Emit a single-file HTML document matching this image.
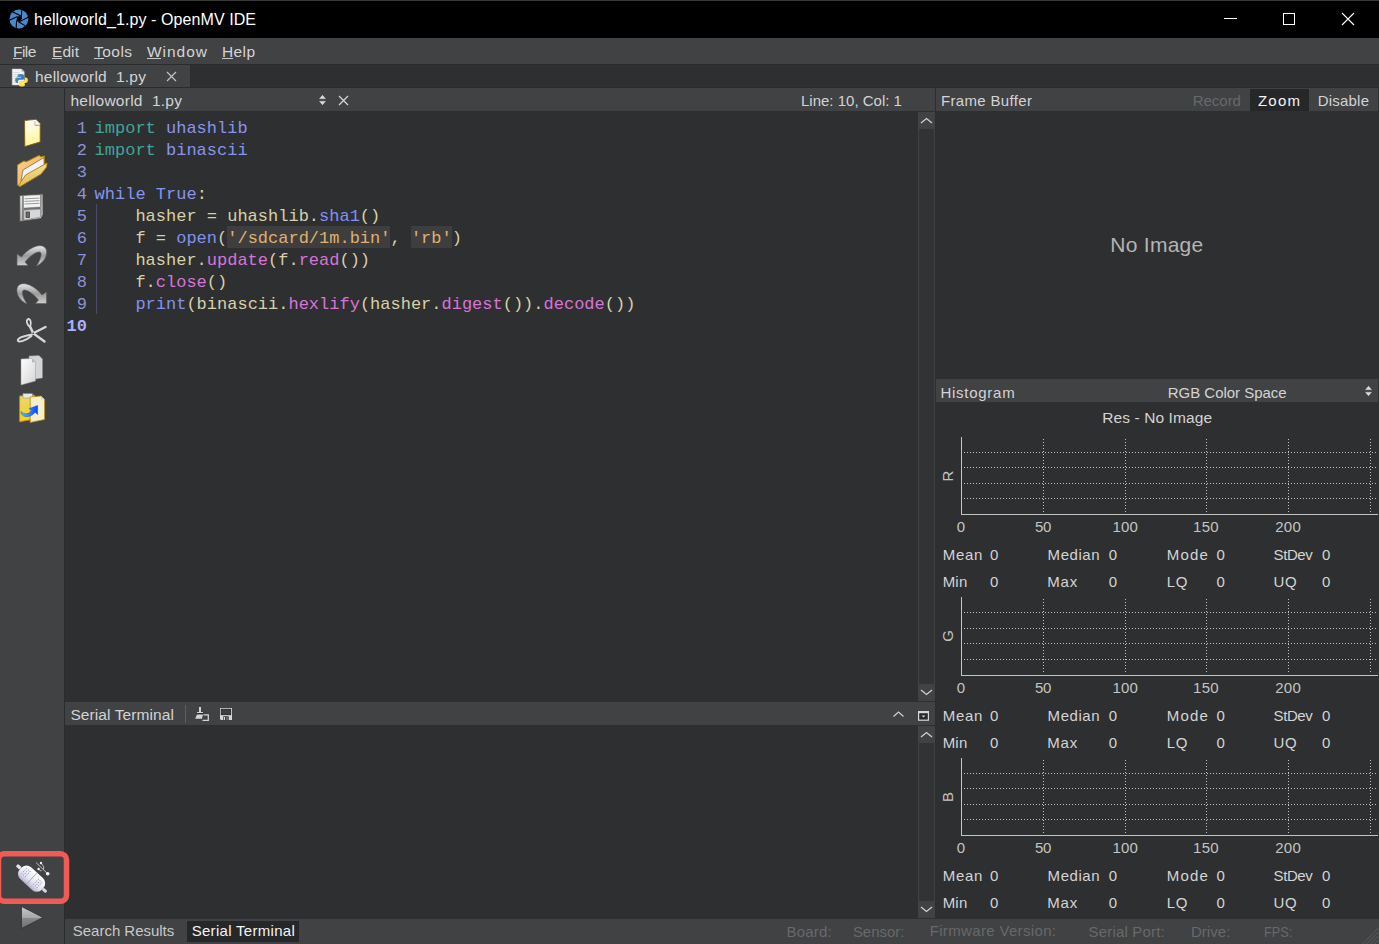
<!DOCTYPE html>
<html><head><meta charset="utf-8">
<style>
*{margin:0;padding:0;box-sizing:border-box}
html,body{width:1379px;height:944px;overflow:hidden;background:#2e2f30}
body{position:relative;font-family:"Liberation Sans",sans-serif;color:#d0d0d0;font-size:16px}
.a{position:absolute}
.t{position:absolute;white-space:pre;line-height:1}
.code{font-family:"Liberation Mono",monospace;font-size:17px;line-height:22px;white-space:pre}
.n{color:#8a92d8}
.kw{color:#43a39c}
.md{color:#8794ee}
.fn{color:#d874d8}
.bi{color:#8291ec}
.tx{color:#d8d0a8}
.st{color:#e0b070;background:#3e3e3e;padding:3px 0 0}
.dot{background-image:linear-gradient(90deg,#c4c4c4 1px,transparent 1px);background-size:3px 1px;height:1px}
.vdot{background-image:linear-gradient(180deg,#c4c4c4 1px,transparent 1px);background-size:1px 3px;width:1px}
</style></head><body>

<div class="a" style="left:0px;top:0px;width:1379px;height:1px;background:#3a3a3a"></div>
<div class="a" style="left:0px;top:1px;width:1379px;height:37px;background:#000"></div>
<svg class="a" style="left:9px;top:9px" width="20" height="20" viewBox="0 0 20 20">
  <circle cx="9.9" cy="10" r="9.4" fill="#4a88cc"/>
  <g stroke="#000" stroke-width="1.1" stroke-linecap="round">
    <line x1="3.8" y1="2.9" x2="11.6" y2="6.8"/>
    <line x1="12.7" y1="1.2" x2="12.3" y2="9.8"/>
    <line x1="18.8" y1="8.4" x2="11.2" y2="12.3"/>
    <line x1="15.9" y1="16.6" x2="9.6" y2="12.7"/>
    <line x1="7.2" y1="18.6" x2="7.6" y2="11.9"/>
    <line x1="0.8" y1="11" x2="8.1" y2="7.7"/>
  </g>
  <polygon points="8.1,7.7 11.6,6.8 12.3,9.8 11.2,12.3 9.6,12.7 7.6,11.9" fill="#000"/>
</svg>
<div class="t" style="left:34.00px;top:12px;font-size:16px;color:#ffffff;letter-spacing:0.088px">helloworld_1.py - OpenMV IDE</div>
<div class="a" style="left:1224px;top:18px;width:13px;height:1px;background:#fff"></div>
<div class="a" style="left:1283px;top:13px;width:12px;height:12px;border:1px solid #fff"></div>
<svg class="a" style="left:1341px;top:12px" width="14" height="14" viewBox="0 0 14 14"><path d="M1 1L13 13M13 1L1 13" stroke="#fff" stroke-width="1.1"/></svg>
<div class="a" style="left:0px;top:38px;width:1379px;height:26px;background:#404244"></div>
<div class="a" style="left:0px;top:64px;width:1379px;height:1px;background:#2a2b2c"></div>
<div class="t" style="left:13.00px;top:44px;font-size:15.5px;color:#d4d4d4;letter-spacing:-0.567px">File</div>
<div class="a" style="left:13px;top:58px;width:9px;height:1px;background:#c8c8c8"></div>
<div class="t" style="left:52.00px;top:44px;font-size:15.5px;color:#d4d4d4;letter-spacing:0.083px">Edit</div>
<div class="a" style="left:52px;top:58px;width:10px;height:1px;background:#c8c8c8"></div>
<div class="t" style="left:94.00px;top:44px;font-size:15.5px;color:#d4d4d4;letter-spacing:0.469px">Tools</div>
<div class="a" style="left:94px;top:58px;width:10px;height:1px;background:#c8c8c8"></div>
<div class="t" style="left:147.00px;top:44px;font-size:15.5px;color:#d4d4d4;letter-spacing:0.975px">Window</div>
<div class="a" style="left:147px;top:58px;width:14px;height:1px;background:#c8c8c8"></div>
<div class="t" style="left:222.00px;top:44px;font-size:15.5px;color:#d4d4d4;letter-spacing:0.375px">Help</div>
<div class="a" style="left:222px;top:58px;width:11px;height:1px;background:#c8c8c8"></div>
<div class="a" style="left:0px;top:65px;width:1379px;height:23px;background:#2e2f30"></div>
<div class="a" style="left:0px;top:65px;width:190px;height:22px;background:#404244"></div>
<div class="a" style="left:0px;top:87px;width:1379px;height:1px;background:#2a2b2c"></div>
<div class="t" style="left:35.00px;top:69px;font-size:15.5px;color:#d4d4d4;letter-spacing:0.217px">helloworld  1.py</div>
<svg class="a" style="left:166px;top:71px" width="11" height="11" viewBox="0 0 11 11"><path d="M1 1L10 10M10 1L1 10" stroke="#c8c8c8" stroke-width="1.1"/></svg>
<svg class="a" style="left:10px;top:66px" width="20" height="22" viewBox="10 66 20 22">
<defs><linearGradient id="pyb" x1="0" y1="0" x2="1" y2="1"><stop offset="0" stop-color="#5a9fd4"/><stop offset="1" stop-color="#306998"/></linearGradient>
<linearGradient id="pyy" x1="0" y1="0" x2="1" y2="1"><stop offset="0" stop-color="#ffe873"/><stop offset="1" stop-color="#ffd43b"/></linearGradient></defs>
<path d="M12.2,69 L21.5,69 L24.2,71.8 L24.2,85 L12.2,85 Z" fill="#f4f4f4" stroke="#c8c8c8" stroke-width="0.5"/>
<path d="M21.5,69 L21.5,71.8 L24.2,71.8 Z" fill="#b8b8b8"/>
<path d="M13.5,72.5 h6 M13.5,74.5 h5 M13.5,76.5 h4 M13.5,78.5 h3 M13.5,80.5 h3 M13.5,82.5 h3" stroke="#c8c8c8" stroke-width="0.6"/>
<path d="M19.5,74 C17.5,74 17.5,75 17.5,76 L17.5,77 L21,77 L21,77.6 L16.8,77.6 C15.5,77.6 15.2,79 15.2,80.3 C15.2,82 16,83 17.2,83 L18,83 L18,81.5 C18,80.5 18.8,79.8 19.8,79.8 L22.5,79.8 C23.5,79.8 24.2,79 24.2,78 L24.2,76 C24.2,75 23.3,74 22,74 Z" fill="url(#pyb)"/>
<path d="M22.8,86.6 C24.8,86.6 24.8,85.6 24.8,84.6 L24.8,83.6 L21.3,83.6 L21.3,83 L25.5,83 C26.8,83 27.9,82 27.9,80.3 C27.9,78.6 27,77.6 25.8,77.6 L25,77.6 L25,79.1 C25,80.1 24.2,80.8 23.2,80.8 L20.5,80.8 C19.5,80.8 18.8,81.6 18.8,82.6 L18.8,84.6 C18.8,85.6 19.7,86.6 21,86.6 Z" fill="url(#pyy)"/>
</svg>
<div class="a" style="left:0px;top:88px;width:64px;height:856px;background:#404244"></div>
<div class="a" style="left:64px;top:88px;width:1px;height:856px;background:#2a2b2c"></div>
<div class="a" style="left:65px;top:88px;width:870px;height:23px;background:#404244"></div>
<div class="t" style="left:70.40px;top:93px;font-size:15.5px;color:#d4d4d4;letter-spacing:0.257px">helloworld  1.py</div>
<div class="t" style="left:801.00px;top:93px;font-size:15px;color:#d4d4d4">Line: 10, Col: 1</div>
<div class="a" style="left:65px;top:112px;width:853px;height:589px;background:#2e2f30"></div>
<!-- code -->
<div class="a code n" style="left:57px;top:118px;width:30px;text-align:right">1
2
3
4
5
6
7
8
9
<b style="color:#a8b0ff">10</b></div>
<div class="a" style="left:96px;top:204px;width:1px;height:110px;background:#4a4b66"></div>
<div class="a code tx" style="left:94.6px;top:118px"><span class="kw">import</span> <span class="md">uhashlib</span>
<span class="kw">import</span> <span class="md">binascii</span>

<span class="md">while</span> <span class="md">True</span>:
    hasher = uhashlib.<span class="bi">sha1</span>()
    f = <span class="bi">open</span>(<span class="st">'/sdcard/1m.bin'</span>, <span class="st">'rb'</span>)
    hasher.<span class="fn">update</span>(f.<span class="fn">read</span>())
    f.<span class="fn">close</span>()
    <span class="bi">print</span>(binascii.<span class="fn">hexlify</span>(hasher.<span class="fn">digest</span>()).<span class="fn">decode</span>())
</div>


<div class="a" style="left:918px;top:112px;width:17px;height:589px;background:#404244"></div>
<div class="a" style="left:919px;top:129px;width:15px;height:555px;background:#323335"></div>
<div class="a" style="left:935px;top:88px;width:1px;height:831px;background:#2d2e2f"></div>
<div class="a" style="left:65px;top:702px;width:870px;height:23px;background:#404244"></div>
<div class="t" style="left:70.40px;top:707px;font-size:15.5px;color:#d4d4d4;letter-spacing:0.096px">Serial Terminal</div>
<div class="a" style="left:918px;top:726px;width:17px;height:192px;background:#404244"></div>
<div class="a" style="left:919px;top:743px;width:15px;height:158px;background:#323335"></div>
<!-- editor header icons -->
<svg class="a" style="left:316px;top:92px" width="14" height="16" viewBox="0 0 14 16"><path d="M2.4,7.2 L6.5,2.6 L10.6,7.2 Z M2.4,8.8 L6.5,13.4 L10.6,8.8 Z" fill="#dadada" stroke="#161616" stroke-width="0.5"/></svg>
<svg class="a" style="left:336px;top:93px" width="15" height="15" viewBox="0 0 15 15"><path d="M3,3 L12,12 M12,3 L3,12" stroke="#d4d4d4" stroke-width="1.3"/></svg>
<!-- scroll chevrons -->
<svg class="a" style="left:918px;top:112px" width="17" height="17" viewBox="0 0 17 17"><path d="M3,11 L8.5,6.5 L14,11" fill="none" stroke="#d0d0d0" stroke-width="1.3"/></svg>
<svg class="a" style="left:918px;top:684px" width="17" height="17" viewBox="0 0 17 17"><path d="M3,6 L8.5,10.5 L14,6" fill="none" stroke="#d0d0d0" stroke-width="1.3"/></svg>
<svg class="a" style="left:918px;top:726px" width="17" height="17" viewBox="0 0 17 17"><path d="M3,11 L8.5,6.5 L14,11" fill="none" stroke="#d0d0d0" stroke-width="1.3"/></svg>
<svg class="a" style="left:918px;top:901px" width="17" height="17" viewBox="0 0 17 17"><path d="M3,6 L8.5,10.5 L14,6" fill="none" stroke="#d0d0d0" stroke-width="1.3"/></svg>
<!-- serial header icons -->
<div class="a" style="left:185px;top:705px;width:1px;height:18px;background:#5c5e60"></div>
<svg class="a" style="left:190px;top:704px" width="50" height="20" viewBox="190 704 50 20">
 <rect x="199" y="707" width="2" height="5" fill="#d4d4d4"/>
 <rect x="197" y="712" width="6" height="1" fill="#d4d4d4"/><rect x="196.5" y="713" width="7" height="1" fill="#2a2a2a"/>
 <path d="M195.2,718.8 L197,714.5 L203,714.5 L202,718.8 Z" fill="#d4d4d4"/>
 <path d="M203.5,714.8 L208.3,714.8 L208.3,720.3 L202.5,720.3" fill="none" stroke="#d4d4d4" stroke-width="1.3"/>
 <path d="M220,708 L232,708 L232,720 L221,720 L220,719 Z" fill="#d6d6d6"/>
 <rect x="221.2" y="709.2" width="9.5" height="5.5" fill="#3c3d3f" stroke="#1c1c1c" stroke-width="0.8"/>
 <rect x="223.2" y="716.3" width="5.5" height="3.7" fill="#2a2a2a"/>
 <rect x="223.8" y="717" width="1.3" height="3" fill="#d8d8d8"/>
 <rect x="226" y="717" width="2.3" height="3" fill="#666"/>
</svg>
<svg class="a" style="left:890px;top:706px" width="16" height="16" viewBox="0 0 16 16"><path d="M3.5,10.5 L8.5,6 L13.5,10.5" fill="none" stroke="#d0d0d0" stroke-width="1.2"/></svg>
<svg class="a" style="left:917px;top:710px" width="13" height="12" viewBox="0 0 13 12"><rect x="1.6" y="1.6" width="9.8" height="8.6" fill="#2a2a2a" stroke="#d8d8d8" stroke-width="1.2"/><rect x="1.6" y="1.6" width="9.8" height="1.6" fill="#d8d8d8"/><path d="M4.6,5.5 L8.4,5.5 L6.5,7.6 Z" fill="#d8d8d8"/></svg>


<div class="a" style="left:65px;top:919px;width:1314px;height:25px;background:#404244"></div>
<div class="t" style="left:72.80px;top:923px;font-size:15px;color:#c8c8c8;letter-spacing:-0.019px">Search Results</div>
<div class="a" style="left:187px;top:921px;width:112px;height:21px;background:#262728"></div>
<div class="t" style="left:191.70px;top:923px;font-size:15px;color:#f4f4f4;letter-spacing:0.295px">Serial Terminal</div>
<div class="t" style="left:786.50px;top:924px;font-size:15px;color:#67696b;letter-spacing:0.210px">Board:</div>
<div class="t" style="left:852.90px;top:924px;font-size:15px;color:#67696b;letter-spacing:-0.042px">Sensor:</div>
<div class="t" style="left:929.70px;top:923px;font-size:15px;color:#67696b;letter-spacing:0.339px">Firmware Version:</div>
<div class="t" style="left:1088.50px;top:924px;font-size:15px;color:#67696b;letter-spacing:0.186px">Serial Port:</div>
<div class="t" style="left:1190.90px;top:924px;font-size:15px;color:#67696b;letter-spacing:0.075px">Drive:</div>
<div class="t" style="left:1263.60px;top:924px;font-size:15px;color:#67696b;transform:scaleX(0.8479);transform-origin:0.00px 0">FPS:</div>
<svg class="a" style="left:1360px;top:926px" width="19" height="18" viewBox="1360 926 19 18"><path d="M1362,944.5 L1378.5,928 M1366,944.5 L1378.5,932 M1370,944.5 L1378.5,936 M1374,944.5 L1378.5,940" stroke="#5e6062" stroke-width="0.9"/></svg>
<div class="a" style="left:936px;top:88px;width:442px;height:23px;background:#404244"></div>
<div class="t" style="left:940.90px;top:93px;font-size:15px;color:#d4d4d4;letter-spacing:0.350px">Frame Buffer</div>
<div class="t" style="left:1192.70px;top:93px;font-size:15px;color:#67696b;letter-spacing:-0.015px">Record</div>
<div class="a" style="left:1250px;top:89px;width:59px;height:22px;background:#262728"></div>
<div class="t" style="left:1258.00px;top:93px;font-size:15px;color:#f4f4f4;letter-spacing:1.208px">Zoom</div>
<div class="t" style="left:1317.70px;top:93px;font-size:15px;color:#d4d4d4;letter-spacing:0.217px">Disable</div>
<div class="t" style="left:1110.30px;top:234px;font-size:21px;color:#b4b4b4;letter-spacing:0.271px">No Image</div>
<div class="a" style="left:936px;top:379px;width:442px;height:23px;background:#404244"></div>
<div class="t" style="left:940.40px;top:385px;font-size:15px;color:#d4d4d4;letter-spacing:0.741px">Histogram</div>
<div class="t" style="left:1167.80px;top:385px;font-size:15px;color:#d4d4d4;letter-spacing:-0.025px">RGB Color Space</div>
<svg class="a" style="left:1362px;top:383px" width="14" height="16" viewBox="0 0 14 16"><path d="M2.4,7.2 L6.5,2.6 L10.6,7.2 Z M2.4,8.8 L6.5,13.4 L10.6,8.8 Z" fill="#dadada" stroke="#161616" stroke-width="0.5"/></svg>
<div class="t" style="left:1102.30px;top:410px;font-size:15.5px;color:#d4d4d4;letter-spacing:0.092px">Res - No Image</div>
<div class="a" style="left:961px;top:437px;width:1px;height:78px;background:#c4c4c4"></div>
<div class="a" style="left:961px;top:514px;width:417px;height:1px;background:#c4c4c4"></div>
<div class="a dot" style="left:964px;top:452px;width:414px"></div>
<div class="a dot" style="left:964px;top:467px;width:414px"></div>
<div class="a dot" style="left:964px;top:483px;width:414px"></div>
<div class="a dot" style="left:964px;top:498px;width:414px"></div>
<div class="a vdot" style="left:1043px;top:439px;height:74px"></div>
<div class="a vdot" style="left:1125px;top:439px;height:74px"></div>
<div class="a vdot" style="left:1206px;top:439px;height:74px"></div>
<div class="a vdot" style="left:1288px;top:439px;height:74px"></div>
<div class="a vdot" style="left:1370px;top:439px;height:74px"></div>
<div class="t" style="left:928px;top:467.5px;width:40px;height:16px;line-height:16px;text-align:center;font-size:15px;color:#c4c4c4;transform:rotate(-90deg)">R</div>
<div class="t" style="left:956.70px;top:519px;font-size:15px;color:#c4c4c4">0</div>
<div class="t" style="left:1035.00px;top:519px;font-size:15px;color:#c4c4c4;letter-spacing:-0.325px">50</div>
<div class="t" style="left:1112.40px;top:519px;font-size:15px;color:#c4c4c4;letter-spacing:0.200px">100</div>
<div class="t" style="left:1193.00px;top:519px;font-size:15px;color:#c4c4c4;letter-spacing:0.300px">150</div>
<div class="t" style="left:1275.30px;top:519px;font-size:15px;color:#c4c4c4;letter-spacing:0.200px">200</div>
<div class="t" style="left:942.70px;top:547px;font-size:15px;color:#d4d4d4;letter-spacing:0.700px">Mean</div>
<div class="t" style="left:990.00px;top:547px;font-size:15px;color:#d4d4d4">0</div>
<div class="t" style="left:1047.60px;top:547px;font-size:15px;color:#d4d4d4;letter-spacing:0.550px">Median</div>
<div class="t" style="left:1108.70px;top:547px;font-size:15px;color:#d4d4d4">0</div>
<div class="t" style="left:1166.80px;top:547px;font-size:15px;color:#d4d4d4;letter-spacing:1.167px">Mode</div>
<div class="t" style="left:1216.60px;top:547px;font-size:15px;color:#d4d4d4">0</div>
<div class="t" style="left:1273.60px;top:547px;font-size:15px;color:#d4d4d4;letter-spacing:-0.444px">StDev</div>
<div class="t" style="left:1321.90px;top:547px;font-size:15px;color:#d4d4d4">0</div>
<div class="t" style="left:942.70px;top:574px;font-size:15px;color:#d4d4d4;letter-spacing:0.188px">Min</div>
<div class="t" style="left:990.00px;top:574px;font-size:15px;color:#d4d4d4">0</div>
<div class="t" style="left:1047.30px;top:574px;font-size:15px;color:#d4d4d4;letter-spacing:0.812px">Max</div>
<div class="t" style="left:1108.70px;top:574px;font-size:15px;color:#d4d4d4">0</div>
<div class="t" style="left:1166.80px;top:574px;font-size:15px;color:#d4d4d4;letter-spacing:0.500px">LQ</div>
<div class="t" style="left:1216.60px;top:574px;font-size:15px;color:#d4d4d4">0</div>
<div class="t" style="left:1273.60px;top:574px;font-size:15px;color:#d4d4d4;letter-spacing:0.500px">UQ</div>
<div class="t" style="left:1321.90px;top:574px;font-size:15px;color:#d4d4d4">0</div>
<div class="a" style="left:961px;top:597px;width:1px;height:79px;background:#c4c4c4"></div>
<div class="a" style="left:961px;top:675px;width:417px;height:1px;background:#c4c4c4"></div>
<div class="a dot" style="left:964px;top:612px;width:414px"></div>
<div class="a dot" style="left:964px;top:628px;width:414px"></div>
<div class="a dot" style="left:964px;top:643px;width:414px"></div>
<div class="a dot" style="left:964px;top:659px;width:414px"></div>
<div class="a vdot" style="left:1043px;top:599px;height:75px"></div>
<div class="a vdot" style="left:1125px;top:599px;height:75px"></div>
<div class="a vdot" style="left:1206px;top:599px;height:75px"></div>
<div class="a vdot" style="left:1288px;top:599px;height:75px"></div>
<div class="a vdot" style="left:1370px;top:599px;height:75px"></div>
<div class="t" style="left:928px;top:628.0px;width:40px;height:16px;line-height:16px;text-align:center;font-size:15px;color:#c4c4c4;transform:rotate(-90deg)">G</div>
<div class="t" style="left:956.70px;top:680px;font-size:15px;color:#c4c4c4">0</div>
<div class="t" style="left:1035.00px;top:680px;font-size:15px;color:#c4c4c4;letter-spacing:-0.325px">50</div>
<div class="t" style="left:1112.40px;top:680px;font-size:15px;color:#c4c4c4;letter-spacing:0.200px">100</div>
<div class="t" style="left:1193.00px;top:680px;font-size:15px;color:#c4c4c4;letter-spacing:0.300px">150</div>
<div class="t" style="left:1275.30px;top:680px;font-size:15px;color:#c4c4c4;letter-spacing:0.200px">200</div>
<div class="t" style="left:942.70px;top:708px;font-size:15px;color:#d4d4d4;letter-spacing:0.700px">Mean</div>
<div class="t" style="left:990.00px;top:708px;font-size:15px;color:#d4d4d4">0</div>
<div class="t" style="left:1047.60px;top:708px;font-size:15px;color:#d4d4d4;letter-spacing:0.550px">Median</div>
<div class="t" style="left:1108.70px;top:708px;font-size:15px;color:#d4d4d4">0</div>
<div class="t" style="left:1166.80px;top:708px;font-size:15px;color:#d4d4d4;letter-spacing:1.167px">Mode</div>
<div class="t" style="left:1216.60px;top:708px;font-size:15px;color:#d4d4d4">0</div>
<div class="t" style="left:1273.60px;top:708px;font-size:15px;color:#d4d4d4;letter-spacing:-0.444px">StDev</div>
<div class="t" style="left:1321.90px;top:708px;font-size:15px;color:#d4d4d4">0</div>
<div class="t" style="left:942.70px;top:735px;font-size:15px;color:#d4d4d4;letter-spacing:0.188px">Min</div>
<div class="t" style="left:990.00px;top:735px;font-size:15px;color:#d4d4d4">0</div>
<div class="t" style="left:1047.30px;top:735px;font-size:15px;color:#d4d4d4;letter-spacing:0.812px">Max</div>
<div class="t" style="left:1108.70px;top:735px;font-size:15px;color:#d4d4d4">0</div>
<div class="t" style="left:1166.80px;top:735px;font-size:15px;color:#d4d4d4;letter-spacing:0.500px">LQ</div>
<div class="t" style="left:1216.60px;top:735px;font-size:15px;color:#d4d4d4">0</div>
<div class="t" style="left:1273.60px;top:735px;font-size:15px;color:#d4d4d4;letter-spacing:0.500px">UQ</div>
<div class="t" style="left:1321.90px;top:735px;font-size:15px;color:#d4d4d4">0</div>
<div class="a" style="left:961px;top:758px;width:1px;height:78px;background:#c4c4c4"></div>
<div class="a" style="left:961px;top:835px;width:417px;height:1px;background:#c4c4c4"></div>
<div class="a dot" style="left:964px;top:773px;width:414px"></div>
<div class="a dot" style="left:964px;top:788px;width:414px"></div>
<div class="a dot" style="left:964px;top:804px;width:414px"></div>
<div class="a dot" style="left:964px;top:819px;width:414px"></div>
<div class="a vdot" style="left:1043px;top:760px;height:74px"></div>
<div class="a vdot" style="left:1125px;top:760px;height:74px"></div>
<div class="a vdot" style="left:1206px;top:760px;height:74px"></div>
<div class="a vdot" style="left:1288px;top:760px;height:74px"></div>
<div class="a vdot" style="left:1370px;top:760px;height:74px"></div>
<div class="t" style="left:928px;top:788.5px;width:40px;height:16px;line-height:16px;text-align:center;font-size:15px;color:#c4c4c4;transform:rotate(-90deg)">B</div>
<div class="t" style="left:956.70px;top:840px;font-size:15px;color:#c4c4c4">0</div>
<div class="t" style="left:1035.00px;top:840px;font-size:15px;color:#c4c4c4;letter-spacing:-0.325px">50</div>
<div class="t" style="left:1112.40px;top:840px;font-size:15px;color:#c4c4c4;letter-spacing:0.200px">100</div>
<div class="t" style="left:1193.00px;top:840px;font-size:15px;color:#c4c4c4;letter-spacing:0.300px">150</div>
<div class="t" style="left:1275.30px;top:840px;font-size:15px;color:#c4c4c4;letter-spacing:0.200px">200</div>
<div class="t" style="left:942.70px;top:868px;font-size:15px;color:#d4d4d4;letter-spacing:0.700px">Mean</div>
<div class="t" style="left:990.00px;top:868px;font-size:15px;color:#d4d4d4">0</div>
<div class="t" style="left:1047.60px;top:868px;font-size:15px;color:#d4d4d4;letter-spacing:0.550px">Median</div>
<div class="t" style="left:1108.70px;top:868px;font-size:15px;color:#d4d4d4">0</div>
<div class="t" style="left:1166.80px;top:868px;font-size:15px;color:#d4d4d4;letter-spacing:1.167px">Mode</div>
<div class="t" style="left:1216.60px;top:868px;font-size:15px;color:#d4d4d4">0</div>
<div class="t" style="left:1273.60px;top:868px;font-size:15px;color:#d4d4d4;letter-spacing:-0.444px">StDev</div>
<div class="t" style="left:1321.90px;top:868px;font-size:15px;color:#d4d4d4">0</div>
<div class="t" style="left:942.70px;top:895px;font-size:15px;color:#d4d4d4;letter-spacing:0.188px">Min</div>
<div class="t" style="left:990.00px;top:895px;font-size:15px;color:#d4d4d4">0</div>
<div class="t" style="left:1047.30px;top:895px;font-size:15px;color:#d4d4d4;letter-spacing:0.812px">Max</div>
<div class="t" style="left:1108.70px;top:895px;font-size:15px;color:#d4d4d4">0</div>
<div class="t" style="left:1166.80px;top:895px;font-size:15px;color:#d4d4d4;letter-spacing:0.500px">LQ</div>
<div class="t" style="left:1216.60px;top:895px;font-size:15px;color:#d4d4d4">0</div>
<div class="t" style="left:1273.60px;top:895px;font-size:15px;color:#d4d4d4;letter-spacing:0.500px">UQ</div>
<div class="t" style="left:1321.90px;top:895px;font-size:15px;color:#d4d4d4">0</div>
<!-- toolbar icons -->
<svg class="a" style="left:0;top:0" width="70" height="944" viewBox="0 0 70 944">
<defs>
 <linearGradient id="gNew" x1="0" y1="0" x2="0.2" y2="1"><stop offset="0" stop-color="#ffffff"/><stop offset="1" stop-color="#fcf69a"/></linearGradient>
 <linearGradient id="gFb" x1="0" y1="0" x2="1" y2="1"><stop offset="0" stop-color="#fcd488"/><stop offset="1" stop-color="#e8a848"/></linearGradient>
 <linearGradient id="gFf" x1="0" y1="0" x2="0" y2="1"><stop offset="0" stop-color="#f4e08a"/><stop offset="1" stop-color="#dcc060"/></linearGradient>
 <linearGradient id="gGray" x1="0" y1="0" x2="1" y2="1"><stop offset="0" stop-color="#f0f0f0"/><stop offset="0.5" stop-color="#b8b8b8"/><stop offset="1" stop-color="#e0e0e0"/></linearGradient>
 <linearGradient id="gArc" x1="0" y1="0" x2="0" y2="1"><stop offset="0" stop-color="#e8e8e8"/><stop offset="0.5" stop-color="#9a9a9a"/><stop offset="1" stop-color="#d0d0d0"/></linearGradient>
 <linearGradient id="gPage" x1="0" y1="0" x2="1" y2="1"><stop offset="0" stop-color="#ffffff"/><stop offset="1" stop-color="#d4d4d4"/></linearGradient>
 <linearGradient id="gClip" x1="0" y1="0" x2="0" y2="1"><stop offset="0" stop-color="#e8d870"/><stop offset="1" stop-color="#f8d020"/></linearGradient>
 <linearGradient id="gBlue" x1="0" y1="0" x2="1" y2="0"><stop offset="0" stop-color="#40d0ff"/><stop offset="1" stop-color="#1040ff"/></linearGradient>
 <linearGradient id="gUsb" x1="0" y1="0" x2="1" y2="0"><stop offset="0" stop-color="#b4b4ca"/><stop offset="0.35" stop-color="#e4e4f0"/><stop offset="1" stop-color="#ffffff"/></linearGradient>
 <linearGradient id="gPlay" x1="0" y1="0" x2="0" y2="1"><stop offset="0" stop-color="#c8c8c8"/><stop offset="0.5" stop-color="#a8a8a8"/><stop offset="0.52" stop-color="#8a8a8a"/><stop offset="1" stop-color="#707070"/></linearGradient>
</defs>
<!-- new -->
<path d="M24.5,120.5 L36,119.3 L40.2,123.5 L40.2,142 L24.8,146.6 Z" fill="url(#gNew)" stroke="#805810" stroke-width="0.9"/>
<path d="M34.8,120.2 L34.8,125.3 L40,125.3 Z" fill="#f4f4f4"/>
<path d="M34.8,125.3 L39.8,125.3" stroke="#909090" stroke-width="0.9"/>
<path d="M34.8,121 L34.8,125" stroke="#a0a0a0" stroke-width="0.6"/>
<!-- open -->
<path d="M17.5,185 L17.5,165 L24,161 L26,162 L39,155.5 L41,157 L44.5,156 L44.5,170 L20,186 Z" fill="url(#gFb)" stroke="#c08418" stroke-width="1"/>
<path d="M21,181 L23,170 L44,157.5 L44,165 Z" fill="#f2f2fa" stroke="#5a4a20" stroke-width="0.6"/>
<path d="M18.5,185.5 L25.5,175 L47,163 L46.5,167 L41,174 L20,186.5 Z" fill="url(#gFf)" stroke="#c08418" stroke-width="1"/>
<!-- save -->
<path d="M19.8,195.5 L43,194 L43,214.5 L41,218.5 L19.8,221.5 Z" fill="url(#gGray)" stroke="#4a4a4a" stroke-width="0.8"/>
<path d="M22.3,196 L23.6,196 L23.6,220.5 L22.3,220.8 Z" fill="#6a6a6a"/>
<path d="M40.2,195 L41.5,195 L41.5,216 L40.2,217 Z" fill="#8a8a8a"/>
<path d="M24,196.5 L40,195.5 L40,206.5 L24,207.5 Z" fill="#f4f4f4"/>
<path d="M24.5,198.8 L39.5,198.1 M24.5,201.4 L39.5,200.7 M24.5,204 L39.5,203.3" stroke="#9a9a9a" stroke-width="1"/>
<path d="M23.6,208 L40.2,207 L40.2,209 L23.6,210 Z" fill="#707070"/>
<path d="M24,210.2 L40.5,209.3 L40.5,217 L24,220 Z" fill="#d8d8d8" stroke="#7a7a7a" stroke-width="0.5"/>
<rect x="26" y="212" width="3.5" height="5.5" fill="#6a6a6a" stroke="#303030" stroke-width="0.7"/>
<!-- undo -->
<path d="M17,254 L17,265.5 L28,265.5 L25,262 C29,257 35,252 39.5,252 C42.5,252.5 41,259 36.5,266 C43,263 47.5,257 46.5,250.5 C45.5,245 39,244.5 33,247.5 C28,250 24,253.5 21.5,257 Z" fill="url(#gArc)" stroke="#5a5a5a" stroke-width="0.6"/>
<!-- redo -->
<g transform="translate(63.5,38) scale(-1,1)">
<path d="M17,254 L17,265.5 L28,265.5 L25,262 C29,257 35,252 39.5,252 C42.5,252.5 41,259 36.5,266 C43,263 47.5,257 46.5,250.5 C45.5,245 39,244.5 33,247.5 C28,250 24,253.5 21.5,257 Z" fill="url(#gArc)" stroke="#5a5a5a" stroke-width="0.6"/>
</g>
<!-- cut -->
<g stroke="#d8d8d8" fill="none" stroke-linecap="round">
<path d="M33.2,333.3 L45.5,327" stroke-width="2.4"/>
<path d="M33.2,333.3 L44.5,341.5" stroke-width="2.4"/>
<path d="M33.2,333.3 L30,326.5" stroke-width="2.6"/>
<path d="M29.8,326.5 C27,325 26,321 27.5,319.5 C29,318 31,320 30.8,323.5 C30.6,325 30.3,326 29.8,326.5 Z" stroke-width="1.8"/>
<path d="M32,334.5 C26,335.5 17.5,337.5 17.8,340.6 C18.2,343 26,340.5 31.5,336" stroke-width="1.9"/>
</g>
<circle cx="33.2" cy="333.3" r="0.8" fill="#202020"/>
<!-- copy -->
<path d="M29,356 L39,355.5 L42.5,359 L42.5,378 L29,380 Z" fill="#d4d4d4" stroke="#8a8a8a" stroke-width="0.5"/>
<path d="M21,359 L32,358.5 L35.5,362 L35.5,381 L21,385 Z" fill="url(#gPage)" stroke="#9a9a9a" stroke-width="0.5"/>
<path d="M32,358.5 L32,362.5 L35.5,362 Z" fill="#b8b8b8"/>
<!-- paste -->
<path d="M19.6,396 L34.5,395 L34.5,419 L19.6,421.8 Z" fill="url(#gClip)" stroke="#b88a10" stroke-width="1"/>
<rect x="23" y="393.6" width="9.3" height="4.4" fill="#e8e8e8" stroke="#909090" stroke-width="0.5"/>
<path d="M30.2,397 L41,396 L44.6,399.5 L44.6,419.5 L30.2,422.5 Z" fill="#f6efcc" stroke="#b88a10" stroke-width="0.8"/>
<path d="M41,396 L41,399.5 L44.6,399.5 Z" fill="#d8d8d0"/><path d="M21.2,411.5 C24,415 29,414.5 31.5,410.8 L29.3,408.6 L37.6,405.4 L37.6,414.6 L35.2,412.2 C31,417.5 24,418 21.2,413.8 Z" fill="url(#gBlue)" stroke="#0830a0" stroke-width="0.4"/>
<!-- usb (connect) -->
<g transform="rotate(-47.5 31.6 878.6)">
<rect x="30" y="858.6" width="3.2" height="5" rx="1" fill="#e4e4ee"/>
<rect x="30" y="893.6" width="3.2" height="5" rx="1" fill="#d4d4e0"/>
<rect x="23.6" y="863.6" width="16" height="30" rx="7" fill="url(#gUsb)"/>
<path d="M23.8,878.6 h15.6" stroke="#9090b0" stroke-width="0.7"/>
<g fill="#9494ae">
<rect x="28.3" y="867.5" width="1" height="1"/><rect x="30.6" y="867.5" width="1" height="1"/><rect x="32.9" y="867.5" width="1" height="1"/><rect x="35.2" y="867.5" width="1" height="1"/>
<rect x="28.3" y="869.8" width="1" height="1"/><rect x="30.6" y="869.8" width="1" height="1"/><rect x="32.9" y="869.8" width="1" height="1"/><rect x="35.2" y="869.8" width="1" height="1"/>
<rect x="28.3" y="872.1" width="1" height="1"/><rect x="30.6" y="872.1" width="1" height="1"/><rect x="32.9" y="872.1" width="1" height="1"/><rect x="35.2" y="872.1" width="1" height="1"/>
<rect x="28.3" y="883.5" width="1" height="1"/><rect x="30.6" y="883.5" width="1" height="1"/><rect x="32.9" y="883.5" width="1" height="1"/><rect x="35.2" y="883.5" width="1" height="1"/>
<rect x="28.3" y="885.8" width="1" height="1"/><rect x="30.6" y="885.8" width="1" height="1"/><rect x="32.9" y="885.8" width="1" height="1"/><rect x="35.2" y="885.8" width="1" height="1"/>
<rect x="28.3" y="888.1" width="1" height="1"/><rect x="30.6" y="888.1" width="1" height="1"/><rect x="32.9" y="888.1" width="1" height="1"/><rect x="35.2" y="888.1" width="1" height="1"/>
</g>
</g>
<g stroke="#e0e0e0" stroke-width="0.8" fill="none">
<path d="M36,862.6 L47.7,873.8"/><path d="M43.6,869.6 L43.6,866.5 L41,863"/><path d="M41.6,870.8 L40.2,870.6 L38.6,869"/>
</g>
<circle cx="47.7" cy="873.8" r="1.8" fill="#f4f4f4"/>
<circle cx="41" cy="863" r="1.2" fill="#f0f0f0"/>
<circle cx="38.6" cy="869" r="1.2" fill="#f0f0f0"/>
<!-- play -->
<path d="M21.5,906.5 L43,917.5 L21.5,928.5 Z" fill="url(#gPlay)" stroke="#2a2a2a" stroke-width="0.7"/>
<!-- red highlight -->
<rect x="-1.5" y="853.75" width="68" height="47.5" rx="6" fill="none" stroke="#ef5b55" stroke-width="5.5"/>
</svg>


</body></html>
